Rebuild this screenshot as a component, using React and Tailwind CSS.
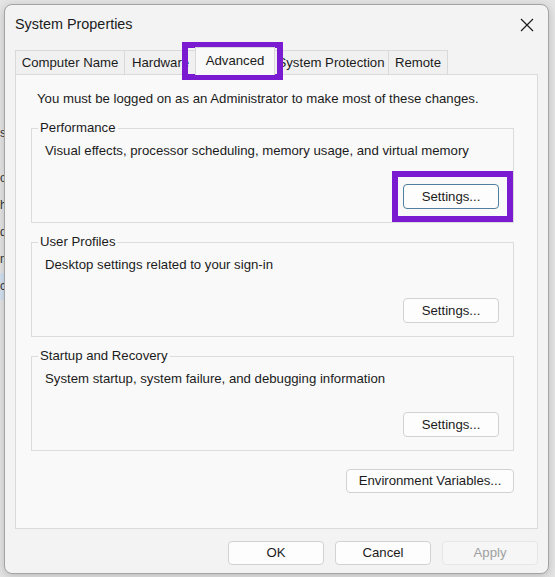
import React from "react";

function Btn({ children, className = "" }) {
  return (
    <button
      type="button"
      className={`flex items-center justify-center rounded-[4px] border leading-[18px] ${className}`}
    >
      {children}
    </button>
  );
}

function Group({ title, text, first, focused }) {
  return (
    <fieldset
      className={`w-[483px] border border-[#dcdcdc] pb-[13px] ${first ? "" : "mt-[10px]"}`}
    >
      <legend className="ml-[6px] px-[2px] leading-[18px]">{title}</legend>
      <div className="mt-[5px] pl-[13px] leading-[18px]">{text}</div>
      <div className="mt-[24px] flex justify-end pr-[14px]">
        <Btn
          className={`h-[25px] w-[96px] bg-[#fdfdfd] ${
            focused ? "border-[#4f7f9e]" : "border-[#d2d2d2]"
          }`}
        >
          Settings...
        </Btn>
      </div>
    </fieldset>
  );
}

function Tab({ label, className = "" }) {
  return (
    <div
      className={`flex h-[24px] items-center justify-center border-l border-t border-[#d9d9d9] bg-[#f0f0f0] leading-[18px] ${className}`}
    >
      {label}
    </div>
  );
}

export default function App() {
  return (
    <div className="relative h-[577px] w-[555px] overflow-hidden bg-[#e4e4e4] font-['Liberation_Sans',Arial,sans-serif] text-[13.2px] text-[#1b1b1b]">
      {/* edge of the settings list in the window behind */}
      <div className="absolute left-0 top-[120px] flex w-[4px] flex-col text-[12px] text-[#333]">
        <div className="h-[26px] leading-[26px]">s</div>
        <div className="h-[19px]" />
        <div className="h-[27px] leading-[27px]">o</div>
        <div className="h-[27px] leading-[27px]">h</div>
        <div className="h-[27px] leading-[27px]">d</div>
        <div className="h-[27px] leading-[27px]">n</div>
        <div className="h-[27px] bg-[#d3e1f1] leading-[27px]">c</div>
      </div>

      {/* System Properties window */}
      <div className="absolute left-[4px] top-[4px] flex h-[570px] w-[545px] flex-col rounded-[8px] border border-[#a3a3a3] bg-[#f3f3f3] shadow-[0_2px_8px_rgba(0,0,0,0.18)]">
        {/* title bar */}
        <div className="flex h-[42px] items-start justify-between pl-[10px] pr-[14px] pt-[10px]">
          <span className="text-[14.4px] leading-[18px]">System Properties</span>
          <svg width="14" height="14" viewBox="0 0 14 14" className="mt-[3px]">
            <path d="M1 1 L13 13 M13 1 L1 13" stroke="#1c1c1c" strokeWidth="1.2" fill="none" />
          </svg>
        </div>

        {/* tabs */}
        <div className="flex h-[27px] items-end pl-[10px]">
          <Tab label="Computer Name" className="w-[109px]" />
          <Tab label="Hardware" className="w-[73px] justify-start pl-[7px]" />
          <div className="relative z-10 -mx-[2px] -mb-px flex h-[28px] w-[80px] items-center justify-center border-x border-t border-[#d9d9d9] bg-[#f9f9f9] pb-[2px] leading-[18px]">
            Advanced
          </div>
          <Tab label="System Protection" className="w-[115px]" />
          <Tab label="Remote" className="w-[60px] border-r" />
        </div>

        {/* tab page */}
        <div className="mx-[10px] flex h-[455px] flex-col border border-[#dadada] bg-[#f9f9f9]">
          <div className="pl-[21px] pt-[15px] leading-[18px]">
            You must be logged on as an Administrator to make most of these changes.
          </div>
          <div className="mt-[11px] flex flex-col pl-[15px]">
            <Group
              first
              focused
              title="Performance"
              text="Visual effects, processor scheduling, memory usage, and virtual memory"
            />
            <Group title="User Profiles" text="Desktop settings related to your sign-in" />
            <Group
              title="Startup and Recovery"
              text="System startup, system failure, and debugging information"
            />
            <div className="mt-[18px] flex w-[483px] justify-end">
              <Btn className="h-[24px] w-[168px] border-[#d2d2d2] bg-[#fdfdfd]">
                Environment Variables...
              </Btn>
            </div>
          </div>
        </div>

        {/* dialog buttons */}
        <div className="flex flex-1 items-start justify-end gap-[11px] pr-[10px] pt-[12px]">
          <Btn className="h-[24px] w-[96px] border-[#d2d2d2] bg-[#fdfdfd]">OK</Btn>
          <Btn className="h-[24px] w-[96px] border-[#d2d2d2] bg-[#fdfdfd]">Cancel</Btn>
          <Btn className="h-[24px] w-[96px] border-[#e6e6e6] bg-[#f6f6f6] text-[#a0a0a0]">Apply</Btn>
        </div>
      </div>

      {/* highlight frames */}
      <div className="absolute left-[182px] top-[42px] h-[38px] w-[101px] border-[6px] border-[#7a1bd2]" />
      <div className="absolute left-[392px] top-[171px] h-[51px] w-[121px] border-[6px] border-[#7a1bd2]" />
    </div>
  );
}
